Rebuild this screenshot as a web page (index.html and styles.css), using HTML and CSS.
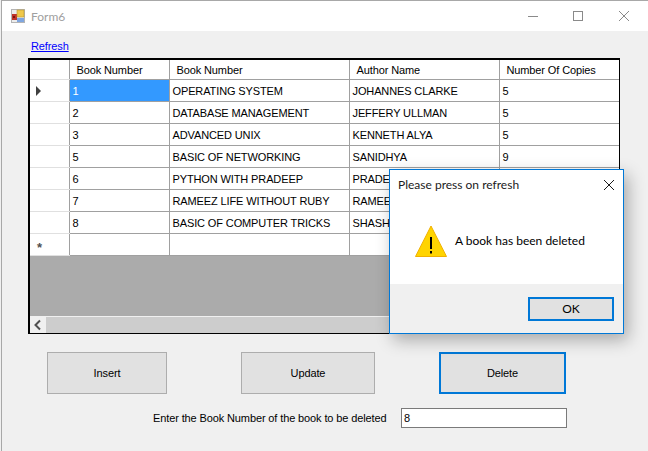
FILE: index.html
```html
<!DOCTYPE html>
<html lang="en">
  <head>
    <meta charset="UTF-8" />
    <title>Form6</title>
    <link rel="stylesheet" href="styles.css">
  </head>
  <body>
    <div class="window">
      <div class="titlebar">
        <svg class="app-icon" width="14" height="14" viewBox="0 0 14 14">
          <rect x="0.5" y="0.5" width="13" height="13" fill="#ececec" stroke="#b4b4b4" />
          <rect x="1" y="5" width="5" height="6" fill="#c0342a" />
          <rect x="2" y="7" width="2" height="2" fill="#7a1510" />
          <rect x="6" y="1" width="7" height="7" fill="#f0c84a" stroke="#b8962c" stroke-width="0.6" />
          <rect x="6" y="9" width="7" height="4" fill="#7fa6e0" />
        </svg>
        <span class="title">Form6</span>
        <div class="win-buttons">
          <svg width="10" height="10" viewBox="0 0 10 10"><path d="M0 5.5h10" stroke="#8a8a8a" fill="none" /></svg>
          <svg width="10" height="10" viewBox="0 0 10 10"><rect x="0.5" y="0.5" width="9" height="9" stroke="#8a8a8a" fill="none" /></svg>
          <svg class="win-close" width="10" height="10" viewBox="0 0 10 10"><path d="M0 0l10 10M10 0L0 10" stroke="#8a8a8a" fill="none" /></svg>
        </div>
      </div>
      <div class="client">
        <a class="refresh" href="#">Refresh</a>
        <div class="grid">
          <table class="book-table">
            <colgroup>
              <col class="col-head" />
              <col class="col-num" />
              <col class="col-name" />
              <col class="col-author" />
              <col />
            </colgroup>
            <tr class="head-row">
              <th></th>
              <th>Book Number</th>
              <th>Book Number</th>
              <th>Author Name</th>
              <th>Number Of Copies</th>
            </tr>
            <tr>
              <td class="row-head"><span class="arrow"></span></td>
              <td class="selected">1</td>
              <td>OPERATING SYSTEM</td>
              <td>JOHANNES CLARKE</td>
              <td>5</td>
            </tr>
            <tr>
              <td class="row-head"></td>
              <td>2</td>
              <td>DATABASE MANAGEMENT</td>
              <td>JEFFERY ULLMAN</td>
              <td>5</td>
            </tr>
            <tr>
              <td class="row-head"></td>
              <td>3</td>
              <td>ADVANCED UNIX</td>
              <td>KENNETH ALYA</td>
              <td>5</td>
            </tr>
            <tr>
              <td class="row-head"></td>
              <td>5</td>
              <td>BASIC OF NETWORKING</td>
              <td>SANIDHYA</td>
              <td>9</td>
            </tr>
            <tr>
              <td class="row-head"></td>
              <td>6</td>
              <td>PYTHON WITH PRADEEP</td>
              <td>PRADEEP</td>
              <td></td>
            </tr>
            <tr>
              <td class="row-head"></td>
              <td>7</td>
              <td>RAMEEZ LIFE WITHOUT RUBY</td>
              <td>RAMEEZ</td>
              <td></td>
            </tr>
            <tr>
              <td class="row-head"></td>
              <td>8</td>
              <td>BASIC OF COMPUTER TRICKS</td>
              <td>SHASHANK</td>
              <td></td>
            </tr>
            <tr>
              <td class="row-head new-row">*</td>
              <td></td>
              <td></td>
              <td></td>
              <td></td>
            </tr>
          </table>
          <div class="grid-empty"></div>
          <div class="scrollbar">
            <svg class="scroll-left" width="16" height="16" viewBox="0 0 16 16"><path d="M10 3.5L5.5 8l4.5 4.5" stroke="#505050" stroke-width="2" fill="none" /></svg>
            <div class="scroll-track"></div>
          </div>
        </div>
        <div class="actions">
          <button type="button" class="btn btn-insert">Insert</button>
          <button type="button" class="btn btn-update">Update</button>
          <button type="button" class="btn btn-delete">Delete</button>
        </div>
        <div class="delete-row">
          <label for="book-number">Enter the Book Number of the book to be deleted</label>
          <input id="book-number" type="text" value="8" />
        </div>
      </div>
      <div class="dialog">
        <div class="dialog-head">
          <span>Please press on refresh</span>
          <svg width="10" height="10" viewBox="0 0 10 10"><path d="M0 0l10 10M10 0L0 10" stroke="#1a1a1a" fill="none" /></svg>
        </div>
        <div class="dialog-body">
          <svg width="32" height="32" viewBox="0 0 32 32">
            <path d="M16 1L31.5 31.5H.5z" fill="#ffd400" stroke="#f0b000" />
            <path d="M16 12v12" stroke="#000" stroke-width="2" fill="none" />
            <path d="M16 26v2.5" stroke="#000" stroke-width="2" fill="none" />
          </svg>
          <span>A book has been deleted</span>
        </div>
        <div class="dialog-foot">
          <button type="button" class="ok-btn">OK</button>
        </div>
      </div>
    </div>
  </body>
</html>
```

FILE: styles.css
```css
html, body {
  margin: 0;
  padding: 0;
}
body {
  width: 648px;
  height: 451px;
  overflow: hidden;
  background-color: #f0f0f0;
  font-family: "Liberation Sans", Arial, sans-serif;
  font-size: 11px;
  letter-spacing: -0.12px;
  color: #000000;
}
.window {
  position: relative;
  height: 450px;
  margin-left: 1px;
  border-left: 1px solid #a8a8a8;
  border-top: 1px solid #a8a8a8;
  background-color: #f0f0f0;
}
.titlebar {
  display: flex;
  align-items: center;
  height: 30px;
  padding-left: 9px;
  background-color: #ffffff;
}
.app-icon {
  margin-right: 6px;
}
.title {
  font-family: "Lato", sans-serif;
  font-size: 12px;
  letter-spacing: 0;
  color: #a0a0a0;
}
.win-buttons {
  display: flex;
  gap: 35px;
  margin-left: auto;
  margin-right: 19px;
}
.win-close {
  margin-left: 1px;
}
.client {
  padding: 8px 0 0 26px;
}
.refresh {
  display: block;
  height: 19px;
  margin-left: 3px;
  line-height: 14px;
  color: #0000ff;
}
.grid {
  display: flex;
  flex-direction: column;
  width: 589px;
  height: 273px;
  border: 1px solid #000000;
  border-width: 2px 1px 1px 2px;
  background-color: #ababab;
}
.book-table {
  width: 589px;
  table-layout: fixed;
  border-collapse: collapse;
  background-color: #ffffff;
}
.col-head {
  width: 39px;
}
.col-num {
  width: 100px;
}
.col-name {
  width: 180px;
}
.col-author {
  width: 150px;
}
.book-table th,
.book-table td {
  height: 21px;
  padding: 0 3px;
  border: 1px solid #a0a0a0;
  font-weight: normal;
  text-align: left;
  white-space: nowrap;
  overflow: hidden;
}
.book-table tr:first-child th {
  border-top: 0;
  height: 19px;
  padding-top: 0;
}
.book-table th {
  padding-left: 7px;
}
.book-table th:first-child,
.book-table .row-head {
  border-left: 0;
  border-color: #e0e0e0;
  border-right-color: #a0a0a0;
}
.book-table th:last-child,
.book-table td:last-child {
  border-right: 0;
}
.selected {
  background-color: #3399ff;
  color: #ffffff;
}
.arrow {
  display: block;
  width: 0;
  height: 0;
  margin-left: 3px;
  border-left: 5px solid #404040;
  border-top: 5px solid transparent;
  border-bottom: 5px solid transparent;
}
.book-table .new-row {
  height: 16px;
  padding: 5px 0 0 7px;
  font-size: 13px;
  line-height: 11px;
  color: #505050;
  font-weight: bold;
}
.grid-empty {
  flex: 1;
}
.scrollbar {
  display: flex;
  height: 16px;
  border-top: 1px solid #f0f0f0;
  background-color: #f0f0f0;
}
.scroll-track {
  flex: 1;
  background-color: #cdcdcd;
}
.actions {
  display: flex;
  align-items: flex-start;
  height: 42px;
  margin-top: 18px;
  margin-left: 19px;
}
.btn {
  box-sizing: border-box;
  height: 42px;
  padding: 0;
  border: 1px solid #adadad;
  border-radius: 0;
  background-color: #e1e1e1;
  font-family: "Liberation Sans", Arial, sans-serif;
  font-size: 11px;
  letter-spacing: -0.12px;
  color: #000000;
}
.btn-insert {
  width: 120px;
}
.btn-update {
  width: 134px;
  margin-left: 74px;
}
.btn-delete {
  width: 127px;
  margin-left: 64px;
  border: 2px solid #0078d7;
}
.delete-row {
  display: flex;
  align-items: center;
  margin-top: 14px;
  margin-left: 125px;
}
.delete-row label {
  width: 248px;
  white-space: nowrap;
}
.delete-row input {
  box-sizing: border-box;
  width: 166px;
  height: 20px;
  padding: 0 2px;
  border: 1px solid #7a7a7a;
  background-color: #ffffff;
  font-family: "Liberation Sans", Arial, sans-serif;
  font-size: 11px;
  outline: none;
}
.dialog {
  position: absolute;
  left: 387px;
  top: 168px;
  display: flex;
  flex-direction: column;
  box-sizing: border-box;
  width: 235px;
  height: 165px;
  border: 1px solid #0078d7;
  background-color: #ffffff;
  box-shadow: 4px 6px 16px rgba(0, 0, 0, 0.3);
  font-family: "Lato", sans-serif;
  font-size: 12px;
  letter-spacing: 0;
}
.dialog-head {
  display: flex;
  justify-content: space-between;
  align-items: center;
  height: 29px;
  padding: 0 9px 0 8px;
  color: #1a1a1a;
}
.dialog-body {
  display: flex;
  align-items: center;
  gap: 8px;
  flex: 1;
  padding: 0 0 2px 25px;
  color: #000000;
}
.dialog-foot {
  display: flex;
  justify-content: flex-end;
  align-items: center;
  height: 49px;
  padding-right: 9px;
  background-color: #f0f0f0;
}
.ok-btn {
  box-sizing: border-box;
  width: 86px;
  height: 24px;
  padding: 0;
  border: 2px solid #0078d7;
  background-color: #e1e1e1;
  font-family: "Lato", sans-serif;
  font-size: 12px;
  color: #000000;
}
```
